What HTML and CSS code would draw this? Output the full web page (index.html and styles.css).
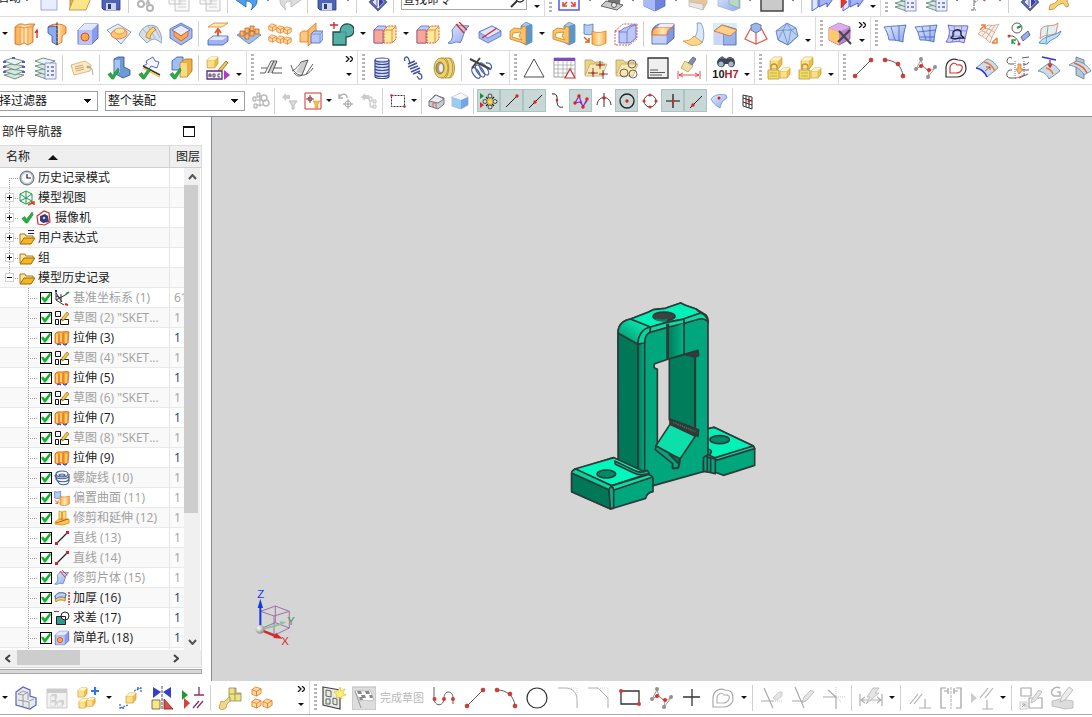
FILE: index.html
```html
<!DOCTYPE html>
<html lang="zh-CN">
<head>
  <meta charset="UTF-8" />
  <meta name="viewport" content="width=device-width, initial-scale=1.0" />
  <title>部件导航器</title>
  <link rel="stylesheet" href="styles.css">
</head>
<body>

  <!-- icon sprite -->
  <svg class="sprite" aria-hidden="true">
    <defs>
      <linearGradient id="gb" x1="0" y1="0" x2="1" y2="1"><stop offset="0" stop-color="#e4ecff"/><stop offset="1" stop-color="#8ea6ea"/></linearGradient>
      <linearGradient id="go" x1="0" y1="0" x2="1" y2="0"><stop offset="0" stop-color="#ffa640"/><stop offset=".5" stop-color="#ffe8b4"/><stop offset="1" stop-color="#ffa640"/></linearGradient>
      <linearGradient id="gy" x1="0" y1="0" x2="1" y2="1"><stop offset="0" stop-color="#fff3b0"/><stop offset="1" stop-color="#efb62e"/></linearGradient>
      <radialGradient id="gg" cx=".35" cy=".35" r=".7"><stop offset="0" stop-color="#ffffff"/><stop offset="1" stop-color="#8a8a8a"/></radialGradient>
    </defs>

    <symbol id="cube-y" viewBox="0 0 12 12"><path d="M1 4l3-3h7v6l-3 4H1z" fill="#f0bc48" stroke="#c89632" stroke-width=".7"/><path d="M1 4l3-3h7L8 4z" fill="#fff4c4"/><path d="M1.500 4.500h6v6h-6z" fill="#fce08c"/></symbol>
    <symbol id="cube-o" viewBox="0 0 12 12"><path d="M1 4l4-3 6 2v5l-5 3-5-2z" fill="#ffdc98" stroke="#e0681c"/><path d="M1 4l5 2 5-3M6 6v5" fill="none" stroke="#e0681c"/></symbol>
    <symbol id="cube-g" viewBox="0 0 12 12"><path d="M1 4l3-3h7v6l-3 4H1z" fill="#d4d4d4" stroke="#b4b4b4" stroke-width=".7"/><path d="M1 4h7v7H1z" fill="#f2f2f2"/></symbol>
    <symbol id="tick" viewBox="0 0 14 14"><path d="M1 8l3-2 2 3 6-8 1 3-6 9H5z" fill="#27b040" stroke="#127a28" stroke-width=".6"/></symbol>

    <!-- standard bar -->
    <symbol id="new" viewBox="0 0 24 24"><path d="M4 2h16v20H4z" fill="#e8edff" stroke="#8a93d8"/></symbol>
    <symbol id="open" viewBox="0 0 24 24"><path d="M2 20V4h7l2 3h9v4" fill="#d9b94e" stroke="#a8842a"/><path d="M1 22l5-12h17l-5 12z" fill="#fae48c" stroke="#b08e30"/></symbol>
    <symbol id="save" viewBox="0 0 24 24"><path d="M3 3h18v19H5l-2-2z" fill="#4c63b8" stroke="#2c3a7c"/><path d="M7 3h10v9H7z" fill="#b9cdf4"/><path d="M7 15h10v7H7z" fill="#cdd3e8"/><path d="M9 16h3v5H9z" fill="#2c3a7c"/></symbol>
    <symbol id="cut" viewBox="0 0 24 24"><path d="M7 2l7 15M17 2l-7 15" stroke="#bbb" stroke-width="2" fill="none"/><circle cx="5" cy="16" r="3" fill="none" stroke="#b5b5b5" stroke-width="2"/><circle cx="14" cy="20" r="3" fill="none" stroke="#b5b5b5" stroke-width="2"/></symbol>
    <symbol id="copy" viewBox="0 0 24 24"><path d="M2 2h11v14H2zM8 8h14v15H8z" fill="#f8f8f8" stroke="#b8b8b8"/><path d="M4 9h4M4 12h4M11 13h8M11 16h8M11 19h8" stroke="#c4c4c4"/></symbol>
    <symbol id="undo" viewBox="0 0 24 24"><path d="M1 12l10-9v5c12-1 15 6 5 14 3-5 1-9-5-9v6z" fill="#4fa0ea" stroke="#1762b4"/></symbol>
    <symbol id="redo" viewBox="0 0 24 24"><path d="M23 12L13 3v5C1 7-2 14 8 22c-3-5-1-9 5-9v6z" fill="#ddd" stroke="#b5b5b5"/></symbol>
    <symbol id="diamond" viewBox="0 0 24 24"><path d="M1 8h9M5 3l8 8" stroke="#222a80" stroke-width="2"/><path d="M14 6l8 8-8 8-8-8z" fill="#f4f6ff" stroke="#50608c" stroke-width="2"/><path d="M13 9v10l-5-5z" fill="#dfe4ff" stroke="#3a3dbb"/><path d="M15 9v10l5-5z" fill="#3a3dbb"/></symbol>
    <symbol id="fit" viewBox="0 0 24 24"><path d="M2 2h20v20H2z" fill="#f4f6ff" stroke="#5362cc" stroke-width="1.500"/><path d="M10 14l-4 4m0-4v4h4M14 14l4 4m0-4v4h-4" stroke="#e2492c" stroke-width="1.500" fill="none"/></symbol>
    <symbol id="laptop" viewBox="0 0 24 24"><path d="M8 14L9 1l12 2-1 13z" fill="#777"/><path d="M1 18l5-5 17 4-6 5z" fill="#ccc" stroke="#444"/><circle cx="14" cy="17" r="2.500" fill="#eee" stroke="#444"/></symbol>
    <symbol id="cube-b" viewBox="0 0 24 24"><path d="M1 6l10-4 11 4v12l-10 5-11-5z" fill="#6d84dc" stroke="#5566c0"/><path d="M1 6l11 4v13L1 18z" fill="#a9b9f5"/><path d="M1 6l10-4 11 4-10 4z" fill="#d2dcff"/></symbol>
    <symbol id="face" viewBox="0 0 24 24"><path d="M3 14V2l18 3v10l-4 7v-6z" fill="#e8c49a" stroke="#c8b8a8"/><path d="M3 14l14 2v6L3 18z" fill="#e8e8e8" stroke="#bbb"/></symbol>
    <symbol id="box-g" viewBox="0 0 24 24"><path d="M1 2h18l4 4v14l-7 3-15-5z" fill="url(#gb)" stroke="#a8b6cc"/><path d="M12 6h10v14l-10-4z" fill="#b9d8c8" stroke="#8cb0a0"/></symbol>
    <symbol id="screen" viewBox="0 0 24 24"><path d="M1 2h22v21H1z" fill="#cacaca" stroke="#444" stroke-width="1.500"/></symbol>
    <symbol id="goto" viewBox="0 0 24 24"><path d="M3 5l6-4v18l-6 4z" fill="#dfe7ff" stroke="#364ac0"/><path d="M10 8h8V3l6 8-6 8v-4l-8 4z" fill="#a4b4f6" stroke="#243cd8"/></symbol>
    <symbol id="goto-r" viewBox="0 0 24 24"><use href="#goto"/><path d="M1 9l6 5-6 6z" fill="#e23a30" stroke="#8e1616" stroke-width=".5"/></symbol>
    <symbol id="stacklist" viewBox="0 0 24 24"><use href="#layers"/><path d="M12 7h11v16H12z" fill="#eef0ff" stroke="#7680c8"/><path d="M14 11h2m2 0h3m-7 4h2m2 0h3m-7 4h2m2 0h3" stroke="#5a6cc8" stroke-width="1.300"/></symbol>
    <symbol id="axes" viewBox="0 0 24 24"><path d="M7 22V3M7 15l9-8M4 22h5" stroke="#999" fill="none" stroke-width="1.500" stroke-dasharray="3 1"/><path d="M14 8l4 5" stroke="#d8544c" stroke-width="2"/></symbol>
    <symbol id="wrench" viewBox="0 0 24 24"><path d="M2 22l1-5 5-2 3-3 5-10 4 4 3 2-3 5 2 5-3 1-3-4-5 2-4 4z" fill="#f4d272" stroke="#b99138"/></symbol>

    <!-- feature bar -->
    <symbol id="extrude" viewBox="0 0 24 24"><path d="M1 5l4-3h4l2 1 4-1h6l-2 3v15l-5 3-4-2-4 2-5-1z" fill="url(#go)" stroke="#c86a26"/><path d="M1 5h6l3 1 4-1h5M10 6v15M14 5v17M6 5v17" stroke="#e08a3c" fill="none"/><path d="M23 16V9m-2 2l2-3 1 3" stroke="#d52b20" stroke-width="1.300" fill="none"/></symbol>
    <symbol id="revolve" viewBox="0 0 24 24"><path d="M3 5c3-4 15-4 18 0v6l-4 3v6l-5 3V2z" fill="url(#go)" stroke="#c86a26"/><path d="M3 5l9-1v19l-5-3v-6l-4-3z" fill="#8caaf0" stroke="#3752ac"/><path d="M12 0v24" stroke="#333" stroke-dasharray="3 1"/></symbol>
    <symbol id="hole" viewBox="0 0 24 24"><path d="M2 8l6-6h14v14l-6 6H2z" fill="#8b9cec" stroke="#4a52b8"/><path d="M2 8l6-6h14l-6 6z" fill="#e0e7ff"/><path d="M2.500 8h13.500v14H2.500z" fill="#b7c5fb"/><circle cx="9" cy="15" r="4" fill="#ffa84a" stroke="#d3341c"/></symbol>
    <symbol id="emboss" viewBox="0 0 24 24"><path d="M0 8l11-6 13 8-10 12z" fill="#e3eefc" stroke="#5a8cc8"/><path d="M4 13c0-7 16-9 16-2 0 7-14 8-16 2z" fill="#ffc47a" stroke="#e66a1f"/><path d="M7 9c2-4 10-4 11 0-2 4-9 4-11 0z" fill="#ffe49c" stroke="#e88a2c"/></symbol>
    <symbol id="offsetemb" viewBox="0 0 24 24"><path d="M1 13C4 4 12 1 19 5c3 4 5 9 5 16l-7-4c-3 0-5 1-8 4z" fill="#d4e0ea" stroke="#7690a6"/><path d="M5 7l9 11M10 4l7 12M16 4l6 12" stroke="#9bb0c1" fill="none"/><path d="M15 5c-4 3-7 6-7 10l4 2c0-4 2-7 6-9z" fill="#ffcf6c" stroke="#bb762a"/></symbol>
    <symbol id="rib" viewBox="0 0 24 24"><path d="M1 7l11-6 11 6v9l-11 7-11-7z" fill="#a6baf0" stroke="#4567bd"/><path d="M3 8l9-5 9 5-9 6z" fill="#e5edff" stroke="#4567bd"/><path d="M5 9l7 5 7-5v5l-7 5-7-5z" fill="#ffa850" stroke="#d45c22"/></symbol>
    <symbol id="patface" viewBox="0 0 24 24"><path d="M2 5l6-4h14l-6 4z" fill="#ffe9b0" stroke="#d58430"/><path d="M12 14V8m-3 3l3-4 3 4" stroke="#e2602f" stroke-width="2" fill="none"/><path d="M2 18l5-4h15v5l-5 4H2z" fill="#9fb2f6" stroke="#4557b8"/><path d="M2.500 18l5-3.500h14l-5 3.500z" fill="#dde6ff"/></symbol>
    <symbol id="pattern" viewBox="0 0 24 24"><path d="M0 13l12-6 12 6-12 9z" fill="#9fc0ea" stroke="#537fc2"/><g fill="#ffb860" stroke="#c0622a"><path d="M3 9h4v5H3zM8 6h4v5H8zM13 4h4v5h-4zM8 12h4v5H8zM13 9h4v5h-4zM18 7h4v5h-4z"/></g></symbol>
    <symbol id="six" viewBox="0 0 24 24"><use href="#cube-o" x="0" y="1" width="9" height="9"/><use href="#cube-o" x="8" y="3" width="9" height="9"/><use href="#cube-o" x="15" y="4" width="9" height="9"/><use href="#cube-o" x="0" y="12" width="9" height="9"/><use href="#cube-o" x="8" y="13" width="9" height="9"/><use href="#cube-o" x="15" y="14" width="9" height="9"/></symbol>
    <symbol id="mirror" viewBox="0 0 24 24"><path d="M1 11l3-2h7v8l-3 3H1z" fill="#ffc880" stroke="#d0792a"/><path d="M9 8l8-7v16l-8 7z" fill="#ffbe62" stroke="#d87325"/><path d="M12 12l3-3h9v8l-3 4h-9z" fill="#b4c8fc" stroke="#4a66b8"/><path d="M12 12h9v9M21 12l3-3" fill="none" stroke="#6f88d0"/></symbol>
    <symbol id="unite" viewBox="0 0 24 24"><path d="M3 10h7c0-11 14-10 14-2 0 5-4 7-8 7v8H3z" fill="#55b0a6" stroke="#234a48" stroke-width="1.300"/><path d="M10 10h6v5" fill="none" stroke="#3b8c86"/><path d="M4 0v7M0 3h8" stroke="#dc2424" stroke-width="1.300"/></symbol>
    <symbol id="trim" viewBox="0 0 24 24"><path d="M1 8l4-4h8v14l-3 3H1z" fill="#bcccff" stroke="#5d69c2"/><path d="M1 8h9v13H1z" fill="#f7a898" stroke="#a5546c"/><path d="M11 8l4-4h8v13l-4 4h-8z" fill="#ffea98" stroke="#d32a24" stroke-dasharray="2 1"/><path d="M11 8h8v13M19 8l4-4" stroke="#d07a30" fill="none"/></symbol>
    <symbol id="trimsheet" viewBox="0 0 24 24"><path d="M5 8l5-6c3 3 7 1 12 2-6 4-5 12-9 17-5-3-7 2-12 0 5-3 5-7 4-13z" fill="url(#gb)" stroke="#4e65b8"/><path d="M9 2l8 9M12 0l8 8" stroke="#dc2a27" stroke-width="1.300"/></symbol>
    <symbol id="split" viewBox="0 0 24 24"><path d="M1 10l13-6 9 5v5l-13 7-9-5z" fill="#a4b9f2" stroke="#5671c6"/><path d="M1 10l13-6 9 5-13 7z" fill="#dce6ff" stroke="#5671c6"/><path d="M4 16L19 6" stroke="#de2929" stroke-width="1.300"/></symbol>
    <symbol id="shell" viewBox="0 0 24 24"><path d="M12 4l5-4 6 3v17l-6 3-5-3z" fill="#a4cae6" stroke="#5a88b0"/><path d="M17 4l6-2v18l-6 3z" fill="#5a96c8"/><path d="M1 9l4-3 8 1v-3l4 1v17L1 17z" fill="#ffc264" stroke="#c48436"/><path d="M4 11l8-1-2 4 3 4-10-3z" fill="#fff6dc" stroke="#b2923a"/></symbol>
    <symbol id="thick" viewBox="0 0 24 24"><path d="M1 2c3 2 5 1 9 0v10c-4 1-6 1-9 0z" fill="#b4cef6" stroke="#4a74b8"/><path d="M9 9c4 2 8 2 14 0v12c-5 3-10 3-14 1z" fill="url(#go)" stroke="#d98226"/><path d="M1 15l5 5m0-4v4H2" stroke="#e0641c" stroke-width="1.500" fill="none"/></symbol>
    <symbol id="scale" viewBox="0 0 24 24"><path d="M5 10l5-4c4 0 5-4 12-3v13l-6 5H5z" fill="#bcc8f8" stroke="#5262c0"/><path d="M5 10h8c1-4 4-6 9-7M13 10v11" fill="none" stroke="#6270cc"/><path d="M1 9l8-7h14M1 9v14h14l8-6V2M1 9h6" stroke="#d93838" stroke-dasharray="2 1" fill="none"/></symbol>
    <symbol id="blend" viewBox="0 0 24 24"><path d="M1 9c1-4 3-5 7-7h15v14l-7 6H1z" fill="#8299e0" stroke="#3c4da0"/><path d="M1.500 12h14v9.500h-14z" fill="#c4d2fb"/><path d="M1 13c0-6 3-7 6-8h16c-5 1-7 4-7 8z" fill="url(#go)" stroke="#d5612a"/><path d="M9 2h14l-2 3H6z" fill="#e9efff"/></symbol>
    <symbol id="faceblend" viewBox="0 0 24 24"><path d="M15 1h4c3 6 4 14 1 20l-8-5c3-3 4-9 3-15z" fill="#dce8f8" stroke="#6b8fc4"/><path d="M1 19c6 0 9-2 11-5l8 6c-2 3-7 4-12 3z" fill="#ffd68c" stroke="#d98b35"/></symbol>
    <symbol id="draft" viewBox="0 0 24 24"><path d="M0 1h24v22H0z" fill="#d3eef4"/><path d="M1 9l8-6 14 4v16H10V12z" fill="#98b2ea" stroke="#4d62b8"/><path d="M1 9l9 3v11H1z" fill="#c8d6f8"/><path d="M1 9l8-6 15 5-7 6z" fill="#ffd08a" stroke="#e56a30"/></symbol>
    <symbol id="pyramid" viewBox="0 0 24 24"><path d="M7 3l5-2 5 2v5l-5 3-5-3z" fill="#9bb8ec" stroke="#4566b2"/><path d="M7 6L1 17l11 5 11-5-6-11M12 11v11" stroke="#e0614a" fill="none" stroke-width="1.300"/></symbol>
    <symbol id="poly" viewBox="0 0 24 24"><path d="M12 1l9 5 2 8-10 9L3 18 1 9z" fill="#b8cff4" stroke="#4c6fb4"/><path d="M1 9l7-1 4-7 4 7 7 6M8 8h8l-3 15zM8 8l-5 10 10 5 10-9M16 8l5-2" stroke="#6c8cc8" fill="none"/></symbol>
    <symbol id="delface" viewBox="0 0 24 24"><path d="M1 6l10-5 11 4v12l-11 6-10-5z" fill="#bc80d4" stroke="#8a4ea4"/><path d="M1 6l10 4v13L1 18z" fill="#ffc868"/><path d="M1 6l10-5 11 4-11 5z" fill="#dcaee8"/><path d="M11 9l12 13M22 8L10 20" stroke="#484848" stroke-width="2.200"/></symbol>
    <symbol id="surf1" viewBox="0 0 24 24"><path d="M1 5c8-1 14-1 22-2-2 7-3 12-3 17-7-2-10-2-14-2C5 12 3 8 1 5z" fill="url(#gb)" stroke="#3c5dbc"/><path d="M8 5l4 13M16 4v15" stroke="#4463bd"/></symbol>
    <symbol id="surf2" viewBox="0 0 24 24"><use href="#surf1"/><path d="M4 10c6-1 12-1 18-2M6 15h15" stroke="#4463bd" fill="none"/></symbol>
    <symbol id="surf3" viewBox="0 0 24 24"><path d="M3 3c7 2 12 0 20 1l-4 17c-6-3-11 0-18-1 4-6 4-11 2-17z" fill="#c6d2fc" stroke="#5148d0"/><path d="M4 8c6 2 11 0 18 1M3 14c6 1 11-1 17 1M9 4c1 6 0 11-2 16M17 4l-3 16" stroke="#7a74e0" fill="none"/><path d="M8 10c2-3 7-3 8 0v3l3 3h-5l-4 1-4-1 2-2z" fill="none" stroke="#222" stroke-width="1.300"/></symbol>
    <symbol id="surf4" viewBox="0 0 24 24"><path d="M2 12L12 3c5 1 8 0 11-1-4 7-7 12-9 19-3-4-8-7-12-9z" fill="#f7efe8" stroke="#c6a48a"/><path d="M6 9c5 1 8 4 10 7M9 6c5 1 8 3 10 5M6 14l10-11M10 17l9-14" stroke="#c4a088" fill="none"/><path d="M4 8l5-5m-4 0h4v4M16 21h5v-5m-5 5l5-5" stroke="#ef7f3a" stroke-width="1.500" fill="none"/></symbol>
    <symbol id="surf5" viewBox="0 0 24 24"><circle cx="10" cy="6" r="5" fill="#fff" stroke="#333"/><path d="M10 6l4-2" stroke="#1b9b3d" stroke-width="2"/><path d="M2 14c5-1 9 3 10 8" stroke="#333" fill="none"/><circle cx="2" cy="14" r="1.500" fill="#d33"/><circle cx="12" cy="22" r="1.500" fill="#d33"/><path d="M14 15l7-6 2 4-7 6z" fill="#98aef0" stroke="#3c4aa0"/><path d="M5 19l3 3m-3 0v-4h4" stroke="#1b9b3d" stroke-width="1.300" fill="none"/></symbol>
    <symbol id="surf6" viewBox="0 0 24 24"><path d="M3 7c6-6 11-1 17-6l-2 10c-6 4-10 0-16 6z" fill="#e4eeec" stroke="#de6b64"/><path d="M1 21C6 13 15 15 23 9c-3 9-10 7-14 13z" fill="#c0def5" stroke="#2d83c4"/><path d="M10 4l-2 17" stroke="#47a99b" fill="none"/></symbol>

    <!-- layer / tools bar -->
    <symbol id="layers" viewBox="0 0 24 24"><g fill="#d4e8de" stroke="#58786f" stroke-width=".8"><path d="M2 19l8-2 12 2-9 4z"/><path d="M2 15l8-2 12 2-9 4z"/><path d="M2 10l8-2 12 2-9 4z"/><path d="M2 5l8-3 12 3-9 4z" fill="#e9f6ee"/></g></symbol>
    <symbol id="layers-b" viewBox="0 0 24 24"><use href="#layers"/><path d="M1 6h3M20 6h3M1 11h3M20 11h3M1 16h3M20 16h3M10 2h3" stroke="#5a5cc4" stroke-width="2"/></symbol>
    <symbol id="tag" viewBox="0 0 24 24"><path d="M1 9l14-4 6 4-1 6-16 4z" fill="#faeac2" stroke="#cfaa6e"/><path d="M5 11l8-2M5 13l9-2M6 15l8-2" stroke="#c08f6a"/><circle cx="18" cy="11" r="1" fill="#fff" stroke="#777"/><path d="M19 11c4 0 3 5 4 8" fill="none" stroke="#888"/></symbol>
    <symbol id="chk1" viewBox="0 0 24 24"><path d="M7 3l4-2h6v10l6 3v5l-7 3-9-5z" fill="#6e98d6" stroke="#25508e"/><path d="M7.500 4H13v12H7.500z" fill="#a5c6f2"/><use href="#tick" x="0" y="11" width="13" height="13"/></symbol>
    <symbol id="chk2" viewBox="0 0 24 24"><path d="M8 5l7-4 2 4 4 1-2 6-6-2-3 5-5-5 4-2z" fill="#f4f6ff" stroke="#3a43c8"/><path d="M5 10l17 9" stroke="#333" stroke-width="1.500"/><path d="M5 12l17 9" stroke="#efc64c" stroke-width="1.500"/><use href="#tick" x="0" y="11" width="13" height="13"/></symbol>
    <symbol id="chk3" viewBox="0 0 24 24"><path d="M3 5l5-4h6v13H3z" fill="#9fc0f4" stroke="#2f5aa2"/><path d="M11 7l5-4h7v12l-5 6h-7z" fill="#eab044" stroke="#ac741e"/><path d="M11.500 7H18v13.500h-6.500z" fill="#fbdc84"/><use href="#tick" x="0" y="11" width="13" height="13"/></symbol>
    <symbol id="abc" viewBox="0 0 24 24"><use href="#cube-y" x="0" y="0" width="13" height="13"/><path d="M20 5l2 2-7 8-3 1 1-3z" fill="#f2cc52" stroke="#7c5b1e"/><path d="M1 15h15v8H1z" fill="#f4ecff" stroke="#55307c" stroke-width="1.300"/><path d="M3 21v-3h2v3m-2-1h2M7 18v3h2v-3zM14 18h-2v3h2" stroke="#333" fill="none"/><path d="M18 14l6 5-6 5z" fill="#b838c0"/></symbol>
    <symbol id="sk1" viewBox="0 0 24 24"><path d="M13 6h5l-5 11H8z" fill="#ccc"/><path d="M1 17h5l6-12h6l-5 12h10M9 17l6-12M15 12h8M2 12h6" fill="none" stroke="#333"/></symbol>
    <symbol id="sk2" viewBox="0 0 24 24"><path d="M12 6l6-2-6 14-6-2z" fill="#ccc"/><path d="M1 9c3 12 15 14 22 3M2 15c4-2 6-4 9-9l7-2-6 15c-3 2-6 1-8-2M23 8l-7 10" fill="none" stroke="#333"/></symbol>
    <symbol id="spring1" viewBox="0 0 24 24"><path d="M5 4v17h14V4z" fill="#d5dcf6"/><g fill="none" stroke="#3a4c94" stroke-width="1.200"><ellipse cx="12" cy="4" rx="7" ry="2"/><path d="M5 7c2 2 12 2 14 0M5 10c2 2 12 2 14 0M5 13c2 2 12 2 14 0M5 16c2 2 12 2 14 0M5 19c2 2 12 2 14 0M5 21c2 2 12 2 14 0M5 4v17M19 4v17"/></g></symbol>
    <symbol id="spring2" viewBox="0 0 24 24"><path d="M4 5C2 1 7-1 8 4l1 3M17 17c5 1 5 7 1 6l-2-3" fill="none" stroke="#44549a" stroke-width="1.300"/><path d="M7 8l7-3M7 11l9-4M9 13l8-3M10 16l9-4M12 18l7-3" stroke="#44549a" stroke-width="1.800"/></symbol>
    <symbol id="bearing" viewBox="0 0 24 24"><path d="M9 2h9c6 2 6 18 0 20H9z" fill="#eed47c" stroke="#a88828"/><path d="M13 2c5 3 5 17 0 20M17 2c5 3 5 17 0 20" fill="none" stroke="#a88828"/><ellipse cx="9" cy="12" rx="7" ry="10" fill="#eed06c" stroke="#a88828"/><ellipse cx="8" cy="12" rx="4" ry="6" fill="#a8a07c" stroke="#806c24"/><ellipse cx="9" cy="12" rx="2" ry="4" fill="#eee"/></symbol>
    <symbol id="delspring" viewBox="0 0 24 24"><g fill="none" stroke="#4a5eaa" stroke-width="1.300"><ellipse cx="7" cy="17" rx="3" ry="6" transform="rotate(-35 7 17)"/><ellipse cx="11" cy="15" rx="3" ry="7" transform="rotate(-35 11 15)"/><ellipse cx="15" cy="13" rx="3" ry="7" transform="rotate(-35 15 13)"/><path d="M17 7c5-1 7 4 4 7"/></g><path d="M1 3l20 10M11 2L3 12" stroke="#444" stroke-width="2"/></symbol>
    <symbol id="tri" viewBox="0 0 24 24"><path d="M12 3l10 18H2z" fill="none" stroke="#222"/></symbol>
    <symbol id="tbl" viewBox="0 0 24 24"><path d="M1 2h21v19H1z" fill="#fff" stroke="#888"/><path d="M1 2h21v3H1z" fill="#7b4ac4"/><path d="M1 9h21M1 13h21M1 17h21M5 5v16M10 5v16M14 5v16M18 5v16" stroke="#aaa"/><path d="M17 13l5 9H12z" fill="#fff" stroke="#c8322c" stroke-width="1.200"/></symbol>
    <symbol id="fold" viewBox="0 0 24 24"><path d="M1 19V4h7l2 2h9v3" fill="#ead28c" stroke="#b89c58"/><path d="M1 20l5-12h17l-5 12z" fill="#fae8b4" stroke="#c0a868"/></symbol>
    <symbol id="foldpt" viewBox="0 0 24 24"><use href="#fold"/><path d="M16 5v8M12 9h9M9 12v9M4 17h10M19 14v9M15 18h9" stroke="#333"/><g fill="#e02820"><circle cx="16" cy="9" r="1.500"/><circle cx="9" cy="17" r="1.500"/><circle cx="19" cy="18" r="1.500"/></g></symbol>
    <symbol id="foldc" viewBox="0 0 24 24"><use href="#fold"/><g fill="none" stroke="#444"><circle cx="17" cy="8" r="4"/><circle cx="9" cy="17" r="4"/><circle cx="18" cy="18" r="4"/></g></symbol>
    <symbol id="note" viewBox="0 0 24 24"><path d="M2 2h20v20H2z" fill="#efefef" stroke="#333" stroke-width="1.300"/><path d="M4 14h8M4 16.500h15M4 19h12" stroke="#333"/></symbol>
    <symbol id="brush" viewBox="0 0 24 24"><path d="M16 1l3 2-4 6-4-2z" fill="#7a92b4" stroke="#556"/><path d="M8 5l8 5-5 6-7-4z" fill="#f0dfa0" stroke="#b49c54"/><path d="M1 15v8M23 15v8M2 19h20M6 17l-4 2 4 2M18 17l4 2-4 2" stroke="#d22a24" fill="none"/></symbol>
    <symbol id="binoc" viewBox="0 0 24 12"><path d="M3 6c1-5 6-6 9-3 3-4 9-2 9 4 0 5-6 6-7 1h-3c-1 5-8 4-8-2z" fill="#3e4654"/><path d="M5 3l3-3 4 3M13 3l3-2 4 2" fill="#5c6678"/><circle cx="7" cy="8" r="2.500" fill="#a8b8cc"/><circle cx="17" cy="8" r="2.500" fill="#a8b8cc"/></symbol>
    <symbol id="lock" viewBox="0 0 24 24"><use href="#cube-y" x="2" y="0" width="14" height="14"/><use href="#cube-y" x="12" y="11" width="12" height="12"/><path d="M4 14v-3c0-4 6-4 6 0v3" fill="none" stroke="#b89438" stroke-width="1.300"/><path d="M1 14h11v9H1z" fill="#f0dc68" stroke="#b89438"/><path d="M3 17h7M3 20h7" stroke="#c4a438"/></symbol>
    <symbol id="line" viewBox="0 0 24 24"><path d="M4 20L20 4" stroke="#333"/><g fill="#d93a30" stroke="#a01c18" stroke-width=".5"><circle cx="4" cy="20" r="2"/><circle cx="20" cy="4" r="2"/></g></symbol>
    <symbol id="arc" viewBox="0 0 24 24"><path d="M3 4c10 0 17 6 18 16" stroke="#333" fill="none"/><g fill="#d93a30" stroke="#a01c18" stroke-width=".5"><circle cx="3" cy="4" r="2"/><circle cx="16" cy="8" r="2"/><circle cx="21" cy="20" r="2"/></g></symbol>
    <symbol id="spline" viewBox="0 0 24 24"><path d="M3 13L8 4l2 6 6 5-1 6 7-9M3 13l5-3c4 1 5 4 8 5l6-3" stroke="#888" fill="none"/><g fill="#909090"><circle cx="3" cy="13" r="2"/><circle cx="8" cy="3" r="2"/><circle cx="15" cy="21" r="2"/><circle cx="22" cy="11" r="2"/></g><g fill="#e02c22"><circle cx="8" cy="10" r="2"/><circle cx="16" cy="14" r="2"/></g></symbol>
    <symbol id="offcurve" viewBox="0 0 24 24"><path d="M2 21V11c1-7 7-9 12-7 7 0 8 4 8 9 0 4-4 8-9 8z" fill="none" stroke="#333" stroke-width="1.200"/><path d="M6 17v-6c1-4 5-5 7-2 5-1 6 2 5 4-1 3-4 4-6 4z" fill="none" stroke="#d63830" stroke-width="1.200"/></symbol>
    <symbol id="cv1" viewBox="0 0 24 24"><path d="M1 12L12 3c5 1 8 4 11 9L12 21C10 16 6 13 1 12z" fill="#ccdceb" stroke="#557ca4"/><path d="M1 12c5 1 9 4 11 9" stroke="#2436e0" stroke-width="1.600" fill="none"/><path d="M9 6c6 1 9 5 11 9" stroke="#ee7a28" stroke-width="1.600" fill="none"/><path d="M10 15l5-4m-4 0h4v3" stroke="#c62a22" fill="none"/></symbol>
    <symbol id="cv2" viewBox="0 0 24 24"><path d="M6 2C1-1-1 8 4 8h4M6 14c-6-1-7 8-2 8h6M16 2l7-1M17 8c3 1 5 0 6-2M16 14h7M13 22l9-4" fill="none" stroke="#333"/><path d="M9 5v15M18 5v15" stroke="#2b34dc" stroke-dasharray="1 1"/><path d="M12 8h3v5h2l-4 5-3-5h2z" fill="#ffb864" stroke="#cf7b2b"/><path d="M9 22c4 0 6-2 10-4" stroke="#e22" fill="none"/></symbol>
    <symbol id="cv3" viewBox="0 0 24 24"><path d="M1 15l11-8c5 1 8 4 11 8l-11 8c-2-5-6-7-11-8z" fill="#ccdceb" stroke="#557ca4"/><path d="M9 12c4 1 6 3 7 6" stroke="#ee7a28" stroke-width="1.600" fill="none"/><path d="M5 1l14 3" stroke="#2436e0" stroke-width="1.300"/><path d="M13 4v6m-2-2l2 3 2-3" stroke="#c62a22" stroke-width="1.300" fill="none"/></symbol>
    <symbol id="cv4" viewBox="0 0 24 24"><path d="M8 1l8 3v19l-8-4z" fill="#b8c8d8" stroke="#56758f"/><path d="M1 9l7-4c7 1 12 5 15 10l-7 4C13 13 7 10 1 9z" fill="#ccdceb" stroke="#557ca4" opacity=".9"/><path d="M6 7c6 2 11 5 13 10" stroke="#e7662a" stroke-width="1.500" fill="none"/></symbol>

    <!-- selection bar, 18px icons -->
    <symbol id="s-tree" viewBox="0 0 18 18"><path d="M5 1h3v4H5zM1 5h3v4H1zM2 12h3v4H2zM8 3v12M5 8h6M5 13h6" fill="#eee" stroke="#aaa"/><circle cx="12" cy="6" r="3" fill="none" stroke="#bbb" stroke-width="1.500"/><circle cx="14" cy="11" r="3" fill="none" stroke="#bbb" stroke-width="1.500"/></symbol>
    <symbol id="s-filt" viewBox="0 0 18 18"><path d="M1 5l4-4v2h4v4H5v2z" fill="#ccc"/><path d="M8 9h8l-3 4v4h-2v-4z" fill="#ddd" stroke="#bbb"/></symbol>
    <symbol id="s-filt2" viewBox="0 0 18 18"><path d="M1 1h16v16H1z" fill="#fff" stroke="#d03030"/><path d="M6 3v8M2 7h8" stroke="#555"/><circle cx="6" cy="7" r="2" fill="none" stroke="#c22"/><path d="M9 9h7l-2 3v4h-3v-4z" fill="#f6c04c" stroke="#c98a1e" stroke-width=".5"/></symbol>
    <symbol id="s-back" viewBox="0 0 18 18"><path d="M2 2v4h4M2 5c3-4 8-4 8 1" fill="none" stroke="#aaa" stroke-width="1.300"/><path d="M11 7v10M6 12h10" stroke="#999"/><circle cx="11" cy="12" r="3" fill="none" stroke="#aaa"/></symbol>
    <symbol id="s-back2" viewBox="0 0 18 18"><path d="M1 5l4-4v2h4v4H5v2z" fill="#ccc"/><path d="M9 5h3v4H9zM13 8h3v3h-3zM13 13h3v3h-3zM10 9v6h3" fill="#eee" stroke="#c4c4c4"/></symbol>
    <symbol id="s-rect" viewBox="0 0 18 18"><path d="M2.500 3.500h13v11h-13z" fill="none" stroke="#333" stroke-dasharray="2 1"/><circle cx="2.500" cy="3.500" r="1.300" fill="#d22"/><circle cx="15.500" cy="14.500" r="1.300" fill="#d22"/></symbol>
    <symbol id="s-shade" viewBox="0 0 18 18"><path d="M1 9l6-6 9 3v6l-6 5-9-3z" fill="#c8ccd6" stroke="#777"/><path d="M1 9l7-6 8 4-6 4z" fill="#eceef4" stroke="#777"/><path d="M5 15v-4h3v5" stroke="#c66" fill="none"/></symbol>
    <symbol id="s-cube" viewBox="0 0 18 18"><path d="M1 5l9-4 7 4v8l-7 4-9-3z" fill="#6ca8e6" stroke="#b48cc0" stroke-width=".7"/><path d="M1 5l9 3v9l-9-3z" fill="#9ccaf4"/><path d="M1 5l9-4 7 4-7 3z" fill="#f4f8ff"/></symbol>
    <symbol id="s-snap" viewBox="0 0 18 18"><path d="M0 1l4 3-4 3z" fill="#14941f"/><path d="M0 10l4 3-4 3z" fill="#d92b20"/><g fill="#ddd" stroke="#222" stroke-width=".8"><circle cx="10" cy="4" r="2"/><circle cx="10" cy="15" r="2"/><circle cx="5" cy="9.500" r="2"/><circle cx="15" cy="9.500" r="2"/></g><path d="M10 6l3 4-3 3-3-3z" fill="#ffe02c" stroke="#9a8300" stroke-width=".5"/><path d="M6 5l2 2M14 5l-2 2M6 14l2-2M14 14l-2-2" stroke="#222" stroke-width="1.300"/></symbol>
    <symbol id="s-end" viewBox="0 0 18 18"><path d="M3 15L14 4" stroke="#222"/><circle cx="14" cy="4" r="1.700" fill="#e02020"/></symbol>
    <symbol id="s-mid" viewBox="0 0 18 18"><path d="M3 16L16 3" stroke="#222"/><circle cx="9" cy="10" r="1.700" fill="#e02020"/></symbol>
    <symbol id="s-ctl" viewBox="0 0 18 18"><path d="M3 2c6-1 5 4 5 7 0 5 2 7 6 6" stroke="#222" fill="none"/><circle cx="8" cy="8" r="1.300" fill="#e02020"/></symbol>
    <symbol id="s-poly" viewBox="0 0 18 18"><path d="M3 11l4-7 4 11 4-8M3 11l5-1 3 4 4-5" stroke="#8a28c4" fill="none" stroke-width="1.200"/><g fill="#e02020"><circle cx="3" cy="11" r="1.700"/><circle cx="7" cy="4" r="1.700"/><circle cx="11" cy="15" r="1.700"/><circle cx="15" cy="7" r="1.700"/></g></symbol>
    <symbol id="s-int" viewBox="0 0 18 18"><path d="M9 1v14M2 13c1-10 13-10 14 0" stroke="#333" fill="none"/><circle cx="9" cy="6" r="1.700" fill="#e02020"/></symbol>
    <symbol id="s-cen" viewBox="0 0 18 18"><circle cx="9" cy="9" r="7" fill="none" stroke="#222" stroke-width="1.300"/><circle cx="9" cy="9" r="1.700" fill="#e02020"/></symbol>
    <symbol id="s-quad" viewBox="0 0 18 18"><circle cx="9" cy="9" r="6" fill="none" stroke="#444"/><g fill="#e03030"><circle cx="9" cy="3" r="1.600"/><circle cx="9" cy="15" r="1.600"/><circle cx="3" cy="9" r="1.600"/><circle cx="15" cy="9" r="1.600"/></g></symbol>
    <symbol id="s-pt" viewBox="0 0 18 18"><path d="M9 2v14M2 9h14" stroke="#111" stroke-width="1.200"/><circle cx="9" cy="9" r="1.500" fill="#e02020"/></symbol>
    <symbol id="s-on" viewBox="0 0 18 18"><path d="M3 16L15 4" stroke="#222"/><circle cx="6" cy="13" r="1.700" fill="#e02020"/></symbol>
    <symbol id="s-surf" viewBox="0 0 18 18"><path d="M1 7C5 2 10 2 16 3l1 3c-5 3-6 6-7 10-5-3-7-5-9-9z" fill="url(#gb)" stroke="#6a94c8" stroke-width=".8"/><circle cx="9" cy="6" r="1.500" fill="#e02020"/></symbol>
    <symbol id="s-grid" viewBox="0 0 18 18"><path d="M4 3l9 2v12l-9-3zM7 4v11M10 5v11M4 6l9 3M4 10l9 3" stroke="#333" fill="#fff"/><circle cx="10" cy="9" r="1.500" fill="#e02020"/></symbol>

    <!-- assembly / sketch bar -->
    <symbol id="asm1" viewBox="0 0 24 24"><path d="M2 6l7-5 7 3v6l6 2v7l-6 4-14-4z" fill="#e6eaeb" stroke="#5a60c8" stroke-width="1.200"/><path d="M4 8l5 1v12M4 14l11 2v6M9 9l5-3M15 15l5-2M4 8l5-3 5 2v7" fill="none" stroke="#888"/></symbol>
    <symbol id="asm2" viewBox="0 0 24 24"><path d="M2 3h20v19H2z" fill="#f2f2f2" stroke="#c0c0c0"/><path d="M2 3h20v4H2z" fill="#ccc"/><use href="#cube-g" x="5" y="8" width="7" height="7"/><use href="#cube-g" x="5" y="14" width="7" height="7"/><use href="#cube-g" x="12" y="14" width="7" height="7"/></symbol>
    <symbol id="asm3" viewBox="0 0 24 24"><use href="#cube-y" x="1" y="1" width="11" height="11"/><use href="#cube-y" x="2" y="12" width="11" height="11"/><use href="#cube-y" x="10" y="11" width="10" height="10"/><path d="M19 1v8M15 5h8" stroke="#2b7ae4" stroke-width="2.200"/></symbol>
    <symbol id="asm4" viewBox="0 0 24 24"><use href="#cube-y" x="6" y="6" width="12" height="12"/><path d="M15 5l7-3m-4 0h4v4M9 19l-8 3m0-4v4h4" stroke="#3f6ed0" stroke-width="1.300" stroke-dasharray="2 1" fill="none"/></symbol>
    <symbol id="asm5" viewBox="0 0 24 24"><path d="M3 1l8 5-8 6zM21 1l-8 5 8 6z" fill="#3540c8"/><path d="M12 0v24" stroke="#222" stroke-dasharray="3 1"/><path d="M2 14h8v9H2z" fill="#f8e68c" stroke="#6b5620"/><path d="M14 13l9 10h-9z" fill="#d8504a" stroke="#8a1c18"/></symbol>
    <symbol id="asm6" viewBox="0 0 24 24"><path d="M1 4l6 5-6 5z" fill="#1f9a3c"/><path d="M3 12l6 5-6 6z" fill="#d84238"/><path d="M18 1v8M13 9h10M12 22l6-7M16 22l6-7" stroke="#86306c" stroke-width="1.300"/></symbol>
    <symbol id="asm7" viewBox="0 0 24 24"><path d="M1 22l2-7 3 1 6-6 3 2-6 6-1 4-4 2z" fill="#f5d682" stroke="#b99a4c"/><path d="M11 2h7v5h5v8H12v-4h-1z" fill="#f0e27c" stroke="#8d8c60"/><path d="M11 8h12M17 2v13" stroke="#8d8c60" fill="none"/></symbol>
    <symbol id="asm8" viewBox="0 0 24 24"><use href="#cube-o" x="2" y="0" width="11" height="11"/><use href="#cube-o" x="2" y="12" width="11" height="11"/><use href="#cube-o" x="13" y="12" width="11" height="11"/></symbol>
    <symbol id="sketch" viewBox="0 0 24 24"><path d="M1 1l17 3v19L1 19z" fill="#e8ebe4" stroke="#444" stroke-width="1.200"/><path d="M4 4l5 1v6l-5-1zM4 13h4v5H4zM11 12l4 1v6l-4-1z" fill="none" stroke="#444"/><path d="M18 1l1 4 4-2-2 4 3 2-4 1v3l-3-2-3 1 1-3-3-3 4-1z" fill="#ffee7a" stroke="#d8b62a" stroke-width=".6"/></symbol>
    <symbol id="flag" viewBox="0 0 24 24"><path d="M0 1h24v23H0z" fill="#ddd" stroke="#bbb"/><path d="M3 5c5-2 9 2 15-1l4 10c-6 2-9-1-14 1z" fill="#fff" stroke="#999" stroke-width=".5"/><path d="M3 5l6 17" stroke="#999"/><path d="M5 5h4l1 3H6zM13 5h4l1 3h-4zM9 9h4l1 3h-4zM17 9h3l1 3h-3zM7 11h3l1 3H8z" fill="#888"/></symbol>
    <symbol id="profile" viewBox="0 0 24 24"><path d="M2 1v11c0 9 10 9 10 0 0-8 9-8 9 0v6" stroke="#333" fill="none"/><g fill="#d93a30"><circle cx="2.500" cy="13" r="2"/><circle cx="12" cy="13" r="2"/><circle cx="21" cy="13" r="2"/></g></symbol>
    <symbol id="circle" viewBox="0 0 24 24"><circle cx="12" cy="12" r="10" fill="none" stroke="#333" stroke-width="1.200"/></symbol>
    <symbol id="fillet" viewBox="0 0 24 24"><path d="M2 2h7c8 0 12 5 12 12v8" stroke="#999" fill="none"/><path d="M11 2h10v10" stroke="#ccc" stroke-dasharray="1 1" fill="none"/></symbol>
    <symbol id="chamfer" viewBox="0 0 24 24"><path d="M1 2h10l10 10v10" stroke="#999" fill="none"/><path d="M11 2h10v10" stroke="#ccc" stroke-dasharray="1 1" fill="none"/></symbol>
    <symbol id="rect" viewBox="0 0 24 24"><path d="M3 5h18v13H3z" stroke="#333" stroke-width="1.300" fill="none"/><g fill="#d93a30"><circle cx="3" cy="5" r="2"/><circle cx="21" cy="18" r="2"/></g></symbol>
    <symbol id="plus" viewBox="0 0 24 24"><path d="M12 3v17M3 11h17" stroke="#333" stroke-width="1.300"/></symbol>
    <symbol id="offg" viewBox="0 0 24 24"><path d="M2 21V11c1-7 7-9 12-7 7 0 8 4 8 9 0 4-4 8-9 8z" fill="none" stroke="#aaa" stroke-width="1.200"/><path d="M6 17v-6c1-4 5-5 7-2 5-1 6 2 5 4-1 3-4 4-6 4z" fill="none" stroke="#b4b4b4" stroke-width="1.200"/></symbol>
    <symbol id="qtrim" viewBox="0 0 24 24"><path d="M4 2l9 20M1 15h12" stroke="#aaa" stroke-width="1.200"/><path d="M13 15h10" stroke="#aaa" stroke-dasharray="1 1"/><path d="M13 12l6-6h3v4l-5 4z" fill="#e4e4e4" stroke="#c4c4c4"/></symbol>
    <symbol id="qext" viewBox="0 0 24 24"><path d="M4 1l9 21M1 15h14" stroke="#aaa" stroke-width="1.200"/><path d="M20 4l3 2-7 8-5 3 2-6z" fill="#e4e4e4" stroke="#b4b4b4"/></symbol>
    <symbol id="corner" viewBox="0 0 24 24"><path d="M1 11h13v12M6 4l8 7" stroke="#aaa" stroke-width="1.200" fill="none"/><path d="M14 1v10h9M14 11l6 6" stroke="#bbb" stroke-dasharray="1 1" fill="none"/></symbol>
    <symbol id="dimg" viewBox="0 0 24 24"><path d="M1 8v12M23 8v12M2 14h20M6 11l-4 3 4 3M18 11l4 3-4 3" stroke="#b0b0b0" stroke-width="1.200" fill="none"/><path d="M14 2h6l-4 5h4L7 18l4-7H8z" fill="#e4e4e4" stroke="#b4b4b4"/></symbol>
    <symbol id="cons1" viewBox="0 0 24 24"><path d="M2 18l8-10M6 18l8-10M11 22h12M17 13v9" stroke="#b0b0b0" stroke-width="1.200"/></symbol>
    <symbol id="cons2" viewBox="0 0 24 24"><path d="M7 2H2v20h5M17 2h5v20h-5M9 2v6M15 2v6M5 5h4M19 5h-4" stroke="#a0a0a0" stroke-width="1.200" fill="none"/><path d="M12 1v22" stroke="#999" stroke-dasharray="3 1"/></symbol>
    <symbol id="cons3" viewBox="0 0 24 24"><path d="M1 7l6 5-6 5z" fill="#ccc"/><path d="M10 12l8-10M15 12l8-10M12 23h11M17 14v9" stroke="#b0b0b0" stroke-width="1.200"/></symbol>
    <symbol id="shp1" viewBox="0 0 24 24"><path d="M2 2h10v8H2zM10 12h13v10H10z" fill="#fff" stroke="#a8a8a8" stroke-width="1.200"/><path d="M1 16h7v7H1z" fill="#f4f4f4" stroke="#c4c4c4"/><path d="M3 21l3-3m-3 0h3v3" stroke="#999" fill="none"/><path d="M20 4l3 2-7 9-4 2 1-4z" fill="#e4e4e4" stroke="#b4b4b4"/></symbol>
    <symbol id="shp2" viewBox="0 0 24 24"><path d="M10 2C4-1-2 7 4 10h6V6H7" fill="none" stroke="#b4b4b4" stroke-width="1.500"/><path d="M2 15l8-2 13 2v7l-8 1-13-3z" fill="#dcdcdc" stroke="#b8b8b8"/><path d="M19 1l4 3-8 10-5 2 2-6z" fill="#ececec" stroke="#b0b0b0"/></symbol>

    <!-- tree icons -->
    <symbol id="t-clock" viewBox="0 0 16 16"><circle cx="8" cy="8" r="7" fill="#b8c4d0" stroke="#666"/><circle cx="8" cy="8" r="5" fill="#fff"/><path d="M8 4v4h4" stroke="#222" fill="none" stroke-width="1.200"/></symbol>
    <symbol id="t-view" viewBox="0 0 16 16"><path d="M1 4l6-3 6 3v7l-6 3-6-3zM1 4l6 4 6-4M7 1v13M1 11l6-3 6 3" fill="none" stroke="#1c9a52"/><path d="M9 15l6-3m-3 0h3v3" stroke="#e33a1c" stroke-width="1.500" fill="none"/></symbol>
    <symbol id="t-cam" viewBox="0 0 16 16"><path d="M1 6l7-5 5 2 1 9-5 3-7-1z" fill="#fff" stroke="#d63026" stroke-width="1.200"/><path d="M4 6l5-2 3 2 1 6-6 1-3-2z" fill="#3a3f94"/><circle cx="8" cy="8" r="2" fill="#c8d0f4" stroke="#222"/></symbol>
    <symbol id="t-fold" viewBox="0 0 16 16"><path d="M1 13V4h5l1 2h7v2" fill="#ffe79a" stroke="#a8791c"/><path d="M1 14l4-6h11l-4 6z" fill="#f7b51e" stroke="#9a6a10"/></symbol>
    <symbol id="t-foldx" viewBox="0 0 16 16"><use href="#t-fold"/><path d="M9 .5h6M9 3.500h6" stroke="#22227c"/></symbol>
    <symbol id="t-csys" viewBox="0 0 16 16"><path d="M2 1v9l8 5M2 10l11-6M2 3l6 9M7 4v8M2 6l5 2" stroke="#333" fill="none"/><path d="M12 4l3-2" stroke="#1c9a3c" stroke-width="2"/><path d="M11 14l3 1" stroke="#d22" stroke-width="2"/><path d="M1 1h2" stroke="#22d" stroke-width="2"/></symbol>
    <symbol id="t-sk" viewBox="0 0 16 16"><path d="M1.500 1.500h5v5h-5zM1.500 9.500h3v5h-3zM6.500 9.500h8v5h-8z" fill="#fff" stroke="#111"/><path d="M13 2l2 2-5 6-2 1 0-3z" fill="#f6c83c" stroke="#8a642c" stroke-width=".7"/></symbol>
    <symbol id="t-ext" viewBox="0 0 16 16"><path d="M1 4c2-3 4-2 6-2s5-1 8 0l-1 11-3 1-4-1-3 1-3-1z" fill="#ffa02c" stroke="#d4601c" stroke-width=".8"/><path d="M3 4v9M7 3v9M12 4v9" stroke="#ffe08a" stroke-width="1.500"/><path d="M5 4v9M9 3v10" stroke="#d4601c" stroke-width=".8"/><path d="M3 15l2-1 2 1M9 14l2 1 2-1" stroke="#2a44c8" fill="none" stroke-width="1.200"/></symbol>
    <symbol id="t-helix" viewBox="0 0 16 16"><g fill="none" stroke="#45619e" stroke-width="1.200"><ellipse cx="8" cy="4" rx="6" ry="3"/><ellipse cx="8" cy="5" rx="3" ry="1"/><path d="M1 5c0 5 14 5 14 0M2 8c1 5 13 5 13 0M4 11c1 5 10 5 11 0M2 4v5l3 4M15 4v7"/></g></symbol>
    <symbol id="t-ste" viewBox="0 0 16 16"><path d="M5 1l3 1 4-1v8H5z" fill="#ffdc70" stroke="#d4a028" stroke-width=".8"/><path d="M1 12l4-3 4 1 6-1v4l-6 2-8-1z" fill="#f9cc3c" stroke="#c99024" stroke-width=".8"/><path d="M8 2v8" stroke="#c66b20"/><path d="M2 13l6-2 6-2" stroke="#e04040" fill="none"/></symbol>
    <symbol id="t-line" viewBox="0 0 16 16"><path d="M2 14L14 2" stroke="#222" stroke-width="1.200"/><path d="M1 12h3v3H1zM12 1h3v3h-3z" fill="#d62020"/></symbol>
    <symbol id="t-thick" viewBox="0 0 16 16"><path d="M1 6c3-4 7-4 11-2l-1 7c-4-2-7-1-9 1z" fill="#ffcf66" stroke="#b9822c"/><path d="M1 6c3-4 7-4 11-2l-1 4C7 6 4 7 2 9z" fill="#b6d3f6" stroke="#4a74b8"/><path d="M15 2v13" stroke="#d22" stroke-width="1.500" stroke-dasharray="2 1"/></symbol>
    <symbol id="t-sub" viewBox="0 0 16 16"><path d="M2.500 6.500h9v8h-9z" fill="#2f9a8c" stroke="#222"/><circle cx="11" cy="6" r="4" fill="#fff" stroke="#222"/><path d="M7 6.500h4.500V10" fill="none" stroke="#222"/><path d="M0 1.500h5" stroke="#d22"/></symbol>
    <symbol id="more" viewBox="0 0 8 6"><path d="M1 0l3 3-3 3M5 0l3 3-3 3" fill="none" stroke="#111" stroke-width="1.300"/></symbol>
  </svg>

  <div class="app">
    <header class="toolbars">

      <div class="bar bar-top">
        <button class="start">启动</button><button class="drop" title="启动选项"></button>
        <button class="tool" title="新建"><svg><use href="#new"/></svg></button>
        <button class="tool" title="打开"><svg><use href="#open"/></svg></button>
        <button class="tool" title="保存"><svg><use href="#save"/></svg></button>
        <i class="sep"></i>
        <button class="tool" title="剪切"><svg><use href="#cut"/></svg></button>
        <button class="tool" title="复制"><svg><use href="#copy"/></svg></button>
        <button class="tool" title="粘贴"><svg><use href="#copy"/></svg></button>
        <i class="sep"></i>
        <button class="tool" title="撤消"><svg><use href="#undo"/></svg></button><button class="drop" title="撤消列表"></button>
        <button class="tool" title="重做"><svg><use href="#redo"/></svg></button>
        <i class="sep"></i>
        <button class="tool" title="保存全部"><svg><use href="#save"/></svg></button><button class="drop" title="更多保存"></button>
        <i class="sep"></i>
        <button class="tool" title="切换窗口"><svg><use href="#diamond"/></svg></button>
        <i class="sep"></i>
        <div class="finder">
          <input type="text" value="查找命令" aria-label="查找命令">
          <button title="查找"><svg viewBox="0 0 16 16"><circle cx="10" cy="6" r="4" fill="#fff" stroke="#333" stroke-width="1.500"/><path d="M7 9l-6 6" stroke="#333" stroke-width="2"/></svg></button>
        </div>
        <button class="drop low" title="工具条选项"></button>
        <i class="grip"></i>
        <button class="tool" title="适合窗口"><svg><use href="#fit"/></svg></button><button class="drop" title="缩放"></button>
        <button class="tool" title="显示"><svg><use href="#laptop"/></svg></button><button class="drop" title="显示选项"></button>
        <button class="tool" title="着色"><svg><use href="#cube-b"/></svg></button><button class="drop" title="渲染样式"></button>
        <button class="tool" title="面分析"><svg><use href="#face"/></svg></button>
        <button class="tool" title="视图"><svg><use href="#box-g"/></svg></button><button class="drop" title="视图选项"></button>
        <button class="tool" title="背景"><svg><use href="#screen"/></svg></button><button class="drop" title="背景选项"></button>
        <i class="sep"></i>
        <button class="tool" title="剪切截面"><svg><use href="#goto"/></svg></button>
        <button class="tool" title="编辑截面"><svg><use href="#goto-r"/></svg></button><button class="drop low" title="工具条选项"></button>
        <i class="grip"></i>
        <button class="tool" title="图层设置"><svg><use href="#stacklist"/></svg></button>
        <button class="tool" title="图层类别"><svg><use href="#stacklist"/></svg></button><button class="drop" title="图层选项"></button>
        <button class="tool" title="WCS"><svg><use href="#axes"/></svg></button><button class="drop" title="WCS 选项"></button>
        <i class="sep"></i>
        <button class="tool" title="对象显示"><svg><use href="#diamond"/></svg></button>
        <button class="tool" title="首选项"><svg><use href="#wrench"/></svg></button>
      </div>

      <div class="bar">
        <button class="drop first" title="更多"></button>
        <button class="tool" title="拉伸"><svg><use href="#extrude"/></svg></button>
        <button class="tool" title="回转"><svg><use href="#revolve"/></svg></button>
        <button class="tool" title="孔"><svg><use href="#hole"/></svg></button>
        <button class="tool" title="凸起"><svg><use href="#emboss"/></svg></button>
        <button class="tool" title="偏置凸起"><svg><use href="#offsetemb"/></svg></button>
        <button class="tool" title="筋板"><svg><use href="#rib"/></svg></button>
        <i class="sep"></i>
        <button class="tool" title="偏置面"><svg><use href="#patface"/></svg></button>
        <button class="tool" title="阵列特征"><svg><use href="#pattern"/></svg></button>
        <button class="tool" title="阵列几何"><svg><use href="#six"/></svg></button>
        <button class="tool" title="镜像特征"><svg><use href="#mirror"/></svg></button>
        <button class="tool" title="求和"><svg><use href="#unite"/></svg></button><button class="drop" title="布尔"></button>
        <button class="tool" title="修剪体"><svg><use href="#trim"/></svg></button><button class="drop" title="修剪"></button>
        <button class="tool" title="拆分体"><svg><use href="#trim"/></svg></button>
        <button class="tool" title="修剪片体"><svg><use href="#trimsheet"/></svg></button>
        <button class="tool" title="分割面"><svg><use href="#split"/></svg></button>
        <button class="tool" title="抽壳"><svg><use href="#shell"/></svg></button><button class="drop" title="抽壳选项"></button>
        <button class="tool" title="壳单元"><svg><use href="#shell"/></svg></button>
        <button class="tool" title="偏置曲面"><svg><use href="#thick"/></svg></button>
        <button class="tool" title="缩放体"><svg><use href="#scale"/></svg></button>
        <i class="sep"></i>
        <button class="tool" title="边倒圆"><svg><use href="#blend"/></svg></button>
        <button class="tool" title="面倒圆"><svg><use href="#faceblend"/></svg></button>
        <button class="tool" title="拔模"><svg><use href="#draft"/></svg></button>
        <button class="tool" title="拔模体"><svg><use href="#pyramid"/></svg></button>
        <button class="tool" title="多面体"><svg><use href="#poly"/></svg></button><button class="drop low" title="工具条选项"></button>
        <i class="grip"></i>
        <button class="tool" title="删除面"><svg><use href="#delface"/></svg></button>
        <button class="drop low more" title="更多按钮"><svg><use href="#more"/></svg></button>
        <i class="grip"></i>
        <button class="tool" title="直纹"><svg><use href="#surf1"/></svg></button>
        <button class="tool" title="通过曲线网格"><svg><use href="#surf2"/></svg></button>
        <button class="tool" title="N 边曲面"><svg><use href="#surf3"/></svg></button>
        <button class="tool" title="延伸曲面"><svg><use href="#surf4"/></svg></button>
        <button class="tool" title="截面曲面"><svg><use href="#surf5"/></svg></button>
        <button class="tool" title="桥接曲面"><svg><use href="#surf6"/></svg></button>
      </div>

      <div class="bar bar-shift">
        <button class="tool" title="图层设置"><svg><use href="#layers-b"/></svg></button>
        <button class="tool" title="图层视图"><svg><use href="#stacklist"/></svg></button>
        <i class="sep"></i>
        <button class="tool" title="属性"><svg><use href="#tag"/></svg></button>
        <i class="sep"></i>
        <button class="tool" title="检查体"><svg><use href="#chk1"/></svg></button>
        <button class="tool" title="检查草图"><svg><use href="#chk2"/></svg></button>
        <button class="tool" title="检查装配"><svg><use href="#chk3"/></svg></button>
        <i class="sep"></i>
        <button class="tool" title="命名"><svg><use href="#abc"/></svg></button><button class="drop low" title="工具条选项"></button>
        <i class="grip"></i>
        <button class="tool" title="齿轮"><svg><use href="#sk1"/></svg></button>
        <button class="tool" title="锥齿轮"><svg><use href="#sk2"/></svg></button>
        <button class="drop low more spaced" title="更多按钮"><svg><use href="#more"/></svg></button>
        <i class="grip"></i>
        <button class="tool" title="压缩弹簧"><svg><use href="#spring1"/></svg></button>
        <button class="tool" title="拉伸弹簧"><svg><use href="#spring2"/></svg></button>
        <button class="tool" title="轴承"><svg><use href="#bearing"/></svg></button>
        <i class="sep"></i>
        <button class="tool" title="删除弹簧"><svg><use href="#delspring"/></svg></button><button class="drop low" title="工具条选项"></button>
        <i class="grip"></i>
        <button class="tool" title="三角形"><svg><use href="#tri"/></svg></button>
        <button class="tool" title="表格"><svg><use href="#tbl"/></svg></button>
        <button class="tool" title="点集"><svg><use href="#foldpt"/></svg></button>
        <button class="tool" title="圆集"><svg><use href="#foldc"/></svg></button>
        <button class="tool" title="注释"><svg><use href="#note"/></svg></button>
        <button class="tool" title="尺寸刷"><svg><use href="#brush"/></svg></button>
        <i class="sep"></i>
        <button class="tool tolerance" title="公差查询"><svg><use href="#binoc"/></svg><span>10<b>H7</b></span></button><button class="drop low" title="工具条选项"></button>
        <i class="grip"></i>
        <button class="tool" title="锁定"><svg><use href="#lock"/></svg></button>
        <button class="tool" title="解锁"><svg><use href="#lock"/></svg></button><button class="drop low" title="工具条选项"></button>
        <i class="grip"></i>
        <button class="tool" title="直线"><svg><use href="#line"/></svg></button>
        <button class="tool" title="圆弧"><svg><use href="#arc"/></svg></button>
        <button class="tool" title="艺术样条"><svg><use href="#spline"/></svg></button>
        <button class="tool" title="偏置曲线"><svg><use href="#offcurve"/></svg></button>
        <button class="tool" title="面上偏置"><svg><use href="#cv1"/></svg></button>
        <button class="tool" title="桥接曲线"><svg><use href="#cv2"/></svg></button>
        <button class="tool" title="投影曲线"><svg><use href="#cv3"/></svg></button>
        <button class="tool" title="相交曲线"><svg><use href="#cv4"/></svg></button>
      </div>

      <div class="bar bar-select">
        <select class="combo combo-filter" aria-label="选择过滤器"><option>选择过滤器</option></select>
        <select class="combo combo-scope" aria-label="选择范围"><option>整个装配</option></select>
        <button class="pick" title="装配约束"><svg><use href="#s-tree"/></svg></button>
        <i class="sep"></i>
        <button class="pick" title="重置过滤器"><svg><use href="#s-filt"/></svg></button>
        <button class="pick" title="细节过滤"><svg><use href="#s-filt2"/></svg></button><button class="drop narrow" title="过滤选项"></button>
        <button class="pick" title="恢复选择"><svg><use href="#s-back"/></svg></button>
        <button class="pick" title="选择上级"><svg><use href="#s-back2"/></svg></button>
        <i class="sep"></i>
        <button class="pick" title="矩形"><svg><use href="#s-rect"/></svg></button><button class="drop narrow" title="选择方式"></button>
        <i class="sep"></i>
        <button class="pick" title="隐藏边"><svg><use href="#s-shade"/></svg></button>
        <button class="pick" title="着色"><svg><use href="#s-cube"/></svg></button>
        <i class="sep"></i>
        <button class="pick on" title="启用捕捉点"><svg><use href="#s-snap"/></svg></button>
        <button class="pick on" title="终点"><svg><use href="#s-end"/></svg></button>
        <button class="pick on" title="中点"><svg><use href="#s-mid"/></svg></button>
        <button class="pick" title="控制点"><svg><use href="#s-ctl"/></svg></button>
        <button class="pick on" title="极点"><svg><use href="#s-poly"/></svg></button>
        <button class="pick" title="交点"><svg><use href="#s-int"/></svg></button>
        <button class="pick on" title="圆弧中心"><svg><use href="#s-cen"/></svg></button>
        <button class="pick" title="象限点"><svg><use href="#s-quad"/></svg></button>
        <button class="pick on" title="现有点"><svg><use href="#s-pt"/></svg></button>
        <button class="pick on" title="点在曲线上"><svg><use href="#s-on"/></svg></button>
        <button class="pick" title="点在面上"><svg><use href="#s-surf"/></svg></button>
        <i class="sep"></i>
        <button class="pick" title="栅格点"><svg><use href="#s-grid"/></svg></button>
      </div>
    </header>

    <main class="workspace">
      <aside class="navigator">
        <div class="nav-title">
          <h2>部件导航器</h2>
          <button class="maximize" title="最大化"></button>
        </div>

        <div class="nav-body">
          <div class="tree-view">
            <table class="tree">
              <thead>
                <tr><th class="col-name">名称<i class="sort"></i></th><th>图层</th></tr>
              </thead>
              <tbody>
                <tr><td><div class="node"><span class="branch top"></span><svg><use href="#t-clock"/></svg>历史记录模式</div></td><td></td></tr>
                <tr><td><div class="node"><span class="branch"><button class="expander" title="展开"></button></span><svg><use href="#t-view"/></svg>模型视图</div></td><td></td></tr>
                <tr><td><div class="node"><span class="branch"><button class="expander" title="展开"></button></span><svg class="mark"><use href="#tick"/></svg><svg><use href="#t-cam"/></svg>摄像机</div></td><td></td></tr>
                <tr><td><div class="node"><span class="branch"><button class="expander" title="展开"></button></span><svg><use href="#t-foldx"/></svg>用户表达式</div></td><td></td></tr>
                <tr><td><div class="node"><span class="branch"><button class="expander" title="展开"></button></span><svg><use href="#t-fold"/></svg>组</div></td><td></td></tr>
                <tr><td><div class="node"><span class="branch last"><button class="expander open" title="折叠"></button></span><svg><use href="#t-fold"/></svg>模型历史记录</div></td><td></td></tr>
                <tr class="dim"><td><label class="node"><span class="branch sub"></span><input type="checkbox" checked><svg><use href="#t-csys"/></svg>基准坐标系 (1)</label></td><td>61</td></tr>
                <tr class="dim"><td><label class="node"><span class="branch sub"></span><input type="checkbox" checked><svg><use href="#t-sk"/></svg>草图 (2) "SKET...</label></td><td>1</td></tr>
                <tr><td><label class="node"><span class="branch sub"></span><input type="checkbox" checked><svg><use href="#t-ext"/></svg>拉伸 (3)</label></td><td>1</td></tr>
                <tr class="dim"><td><label class="node"><span class="branch sub"></span><input type="checkbox" checked><svg><use href="#t-sk"/></svg>草图 (4) "SKET...</label></td><td>1</td></tr>
                <tr><td><label class="node"><span class="branch sub"></span><input type="checkbox" checked><svg><use href="#t-ext"/></svg>拉伸 (5)</label></td><td>1</td></tr>
                <tr class="dim"><td><label class="node"><span class="branch sub"></span><input type="checkbox" checked><svg><use href="#t-sk"/></svg>草图 (6) "SKET...</label></td><td>1</td></tr>
                <tr><td><label class="node"><span class="branch sub"></span><input type="checkbox" checked><svg><use href="#t-ext"/></svg>拉伸 (7)</label></td><td>1</td></tr>
                <tr class="dim"><td><label class="node"><span class="branch sub"></span><input type="checkbox" checked><svg><use href="#t-sk"/></svg>草图 (8) "SKET...</label></td><td>1</td></tr>
                <tr><td><label class="node"><span class="branch sub"></span><input type="checkbox" checked><svg><use href="#t-ext"/></svg>拉伸 (9)</label></td><td>1</td></tr>
                <tr class="dim"><td><label class="node"><span class="branch sub"></span><input type="checkbox" checked><svg><use href="#t-helix"/></svg>螺旋线 (10)</label></td><td>1</td></tr>
                <tr class="dim"><td><label class="node"><span class="branch sub"></span><input type="checkbox" checked><svg><use href="#thick"/></svg>偏置曲面 (11)</label></td><td>1</td></tr>
                <tr class="dim"><td><label class="node"><span class="branch sub"></span><input type="checkbox" checked><svg><use href="#t-ste"/></svg>修剪和延伸 (12)</label></td><td>1</td></tr>
                <tr class="dim"><td><label class="node"><span class="branch sub"></span><input type="checkbox" checked><svg><use href="#t-line"/></svg>直线 (13)</label></td><td>1</td></tr>
                <tr class="dim"><td><label class="node"><span class="branch sub"></span><input type="checkbox" checked><svg><use href="#t-line"/></svg>直线 (14)</label></td><td>1</td></tr>
                <tr class="dim"><td><label class="node"><span class="branch sub"></span><input type="checkbox" checked><svg><use href="#trimsheet"/></svg>修剪片体 (15)</label></td><td>1</td></tr>
                <tr><td><label class="node"><span class="branch sub"></span><input type="checkbox" checked><svg><use href="#t-thick"/></svg>加厚 (16)</label></td><td>1</td></tr>
                <tr><td><label class="node"><span class="branch sub"></span><input type="checkbox" checked><svg><use href="#t-sub"/></svg>求差 (17)</label></td><td>1</td></tr>
                <tr><td><label class="node"><span class="branch sub"></span><input type="checkbox" checked><svg><use href="#hole"/></svg>简单孔 (18)</label></td><td>1</td></tr>
                <tr><td><div class="node"><span class="branch sub"></span></div></td><td></td></tr>
              </tbody>
            </table>
            <div class="vscroll">
              <button title="向上"><svg viewBox="0 0 9 6"><path d="M1 5l3.500-4L8 5" fill="none" stroke="#555" stroke-width="2"/></svg></button>
              <div class="thumb"></div>
              <button class="end" title="向下"><svg viewBox="0 0 9 6"><path d="M1 1l3.500 4L8 1" fill="none" stroke="#555" stroke-width="2"/></svg></button>
            </div>
          </div>
          <div class="hscroll">
            <button title="向左"><svg viewBox="0 0 6 9"><path d="M5 1L1 4.500 5 8" fill="none" stroke="#444" stroke-width="2"/></svg></button>
            <div class="thumb"></div>
            <button class="end" title="向右"><svg viewBox="0 0 6 9"><path d="M1 1l4 3.500L1 8" fill="none" stroke="#444" stroke-width="2"/></svg></button>
          </div>
        </div>
        <div class="splitter"></div>
      </aside>

      <section class="viewport">
        <svg class="part" viewBox="0 0 615 660" stroke="#2f3a38" stroke-width="5" stroke-linejoin="round">
          <defs>
            <linearGradient id="edge" x1="0" y1="0" x2="1" y2="0"><stop offset="0" stop-color="#007a5a"/><stop offset="1" stop-color="#00b084"/></linearGradient>
            <linearGradient id="round" x1="0" y1="1" x2="1" y2="0"><stop offset="0" stop-color="#008a66"/><stop offset="1" stop-color="#0fffc4"/></linearGradient>
            <linearGradient id="groove" x1="0" y1="0" x2="1" y2="0"><stop offset="0" stop-color="#007e5c"/><stop offset="1" stop-color="#00b588"/></linearGradient>
          </defs>
          <!-- right foot -->
          <path d="M440 402l22-5 118 56 4 8v50l-94 30-20-8-42-4z" fill="#00a67c"/>
          <path d="M440 402l22-5 118 56-114 36-26-12z" fill="#00f2b6"/>
          <path d="M580 453l4 8-116 35-2-8z" fill="#0be0a8"/>
          <ellipse cx="479" cy="434" rx="29" ry="12" fill="#008a68"/>
          <path d="M430 474c2-12 22-16 24-4-1 12-12 10-14 16l26 6v44l-36-8z" fill="#00a67c"/>
          <path d="M442 484v46M452 488v46" fill="none"/>
          <!-- tower -->
          <path d="M174 114c0-24 16-38 38-42l52-20 16-8 36-4 46-16 12 6 34 12 30 18c6 8 8 18 6 30v388l-14 10v42l-150 42-48-44-57-30z" fill="#00a67c"/>
          <path d="M174 114l60 34v384l-59-34z" fill="#007858"/>
          <path d="M234 148c6-2 14-4 20-4v380c0 8-8 10-20 8z" fill="url(#edge)"/>
          <path d="M174 114c0-24 16-38 38-42l60 24c-20 6-36 18-38 52z" fill="url(#round)"/>
          <path d="M234 148c0-28 14-48 38-52l-2 16c-12 6-16 18-16 32-8 0-14 2-20 4z" fill="#00d6a0"/>
          <path d="M212 72l52-20 16-8 36-4 46-16 12 6 34 12 14 12-58 20-44 8-48 14z" fill="#00f2b6"/>
          <path d="M272 96l48-14 44-8 58-20c12 4 20 14 22 26-8-8-16-10-26-8l-48 14-50 12-50 14z" fill="#0cdba5"/>
          <ellipse cx="312" cy="64" rx="33" ry="13" fill="#3a4340"/>
          <path d="M286 72c10 4 24 5 36 2" stroke="#008a68" fill="none"/>
          <path d="M328 98c14 2 30-8 44-14v98c-14 6-30 0-44 8z" fill="url(#groove)" stroke="none"/>
          <path d="M323 86v106" stroke-width="9"/>
          <path d="M372 72v108" fill="none"/>
          <!-- window -->
          <path d="M284 206l42-14 48-14 32-6v240l-42 78-10 30h-16v-18l-48-48 2-8V222c-10 0-12-8-8-16z" fill="#d5d5d5"/>
          <path d="M328 192l46-14 31-6v236l-77-34z" fill="#007d5b"/>
          <path d="M374 178l40-12 2 16-12 4z" fill="#333c39"/>
          <path d="M405 182v225" fill="none"/>
          <path d="M330 372l86 32-2 20-84-36z" fill="#323b38"/>
          <path d="M340 382l66 28" stroke="#647a72" stroke-width="4" stroke-dasharray="3 4"/>
          <path d="M406 424l-46 68v26l50-40z" fill="#00a67c" stroke="none"/>
          <path d="M288 452l72 40-2 16-4 10-16 2v-14l-52-42z" fill="#00a67c"/>
          <path d="M330 388l76 36-46 68-72-40z" fill="#0be0aa"/>
          <path d="M328 478l30 12v18z" fill="#007858"/>
          <!-- left foot -->
          <path d="M35 534c0-8 8-10 16-12l110-34 20 12 52 30 40 12 6 8v40c-14 2-20 10-22 20l-105 32-117-52z" fill="#00a67c"/>
          <path d="M35 534l112 50 5 58-117-52z" fill="#007858"/>
          <path d="M44 522l118-34 104 48-110 36z" fill="#00f8bc"/>
          <path d="M35 534c0-8 6-10 12-12l108 50-8 12z" fill="#00d8a0"/>
          <path d="M156 572l110-34 12 8-118 40z" fill="#0be0a8"/>
          <path d="M147 584c2-10 14-10 14 2v54h-10z" fill="#00b488"/>
          <path d="M164 498l58 28c16 8 30 6 40 0l6 10c-14 4-34 4-46-2l-56-26z" fill="#00c090"/>
          <ellipse cx="139" cy="537" rx="28" ry="12" fill="#008a68"/>
        </svg>

        <svg class="triad" viewBox="0 0 192 216">
          <path d="M62 94l44-16 42 16v50l-42 20-44-16zM62 94l40 14 46-14M102 108v54M106 78v50l42 16M106 128l-44 18" fill="none" stroke="#a070a8" stroke-width="3"/>
          <path d="M62 146l58-16v-6l20 2-18 10-60 16z" fill="#8cc49c"/>
          <path d="M61 148V78" stroke="#1438e8" stroke-width="6"/><path d="M53 84l8-28 8 28z" fill="#1438e8"/>
          <path d="M62 150l48 20" stroke="#d42a2a" stroke-width="7"/><path d="M100 174l8-16 20 18z" fill="#d42a2a"/>
          <circle cx="60" cy="148" r="13" fill="url(#gg)"/>
          <text x="52" y="54" fill="#1438e8">Z</text><text x="124" y="194" fill="#d42a2a">X</text><text x="142" y="134" fill="#3f9a50">Y</text>
        </svg>
      </section>
    </main>

    <footer class="bar bar-bottom">
      <button class="drop first" title="更多"></button>
      <button class="tool" title="装配导航"><svg><use href="#asm1"/></svg></button>
      <button class="tool" title="窗口" disabled><svg><use href="#asm2"/></svg></button>
      <button class="tool" title="添加组件"><svg><use href="#asm3"/></svg></button><button class="drop" title="组件"></button>
      <button class="tool" title="移动组件"><svg><use href="#asm4"/></svg></button>
      <button class="tool" title="镜像装配"><svg><use href="#asm5"/></svg></button>
      <button class="tool" title="约束"><svg><use href="#asm6"/></svg></button>
      <i class="sep"></i>
      <button class="tool" title="编辑组件"><svg><use href="#asm7"/></svg></button>
      <button class="tool" title="爆炸图"><svg><use href="#asm8"/></svg></button>
      <button class="drop low more spaced" title="更多按钮"><svg><use href="#more"/></svg></button>
      <i class="grip"></i>
      <button class="tool" title="草图"><svg><use href="#sketch"/></svg></button>
      <button class="finish" disabled><svg><use href="#flag"/></svg>完成草图</button>
      <button class="tool" title="轮廓"><svg><use href="#profile"/></svg></button>
      <button class="tool" title="直线"><svg><use href="#line"/></svg></button>
      <button class="tool" title="圆弧"><svg><use href="#arc"/></svg></button>
      <button class="tool" title="圆"><svg><use href="#circle"/></svg></button>
      <button class="tool" title="圆角" disabled><svg><use href="#fillet"/></svg></button>
      <button class="tool" title="倒斜角" disabled><svg><use href="#chamfer"/></svg></button>
      <button class="tool" title="矩形"><svg><use href="#rect"/></svg></button>
      <button class="tool" title="艺术样条"><svg><use href="#spline"/></svg></button>
      <button class="tool" title="点"><svg><use href="#plus"/></svg></button>
      <button class="tool" title="偏置曲线" disabled><svg><use href="#offg"/></svg></button><button class="drop" title="曲线"></button>
      <i class="sep"></i>
      <button class="tool" title="快速修剪" disabled><svg><use href="#qtrim"/></svg></button>
      <button class="tool" title="快速延伸" disabled><svg><use href="#qext"/></svg></button>
      <button class="tool" title="制作拐角" disabled><svg><use href="#corner"/></svg></button>
      <i class="sep"></i>
      <button class="tool" title="自动判断尺寸" disabled><svg><use href="#dimg"/></svg></button><button class="drop" title="尺寸"></button>
      <i class="sep"></i>
      <button class="tool" title="几何约束" disabled><svg><use href="#cons1"/></svg></button>
      <button class="tool" title="设为对称" disabled><svg><use href="#cons2"/></svg></button>
      <button class="tool" title="显示约束" disabled><svg><use href="#cons3"/></svg></button><button class="drop" title="约束选项"></button>
      <i class="sep"></i>
      <button class="tool" title="转换参考" disabled><svg><use href="#shp1"/></svg></button>
      <button class="tool" title="备选解" disabled><svg><use href="#shp2"/></svg></button>
    </footer>
  </div>

</body>
</html>
```
FILE: styles.css
```css
:root {
  --line: #dcdcdc;
  --frame: #868e93;
  --canvas: #d5d5d5;
  --dim: #a0a0a0;
}

* {
  box-sizing: border-box;
}

body {
  margin: 0;
  font: 12px/20px "Open Sans", "Noto Sans CJK SC", sans-serif;
  color: #1a1a1a;
  background: #fff;
}

button {
  padding: 0;
  border: 0;
  background: none;
  font: inherit;
  color: inherit;
}

.sprite {
  position: absolute;
  width: 0;
  height: 0;
}

.app {
  display: flex;
  flex-direction: column;
  height: 100vh;
  overflow: hidden;
}

/* toolbars */
.bar {
  display: flex;
  align-items: center;
  height: 34px;
  border-bottom: 1px solid var(--line);
  overflow: hidden;
}

.bar > * {
  flex: none;
}

.bar-top {
  height: 17px;
  align-items: flex-end;
}

.bar-shift {
  margin-left: -2px;
}

.tool {
  display: flex;
  align-items: center;
  justify-content: center;
  width: 31px;
  height: 33px;
}

.tool svg {
  width: 24px;
  height: 24px;
  stroke-width: .8;
}

.sep {
  width: 6px;
  height: 33px;
  background: linear-gradient(#d0d0d0, #d0d0d0) 2px 4px / 1px 26px no-repeat;
}

.grip {
  width: 9px;
  height: 33px;
  margin-left: 1px;
  border-left: 1px solid var(--line);
  background: repeating-linear-gradient(#b4b4b4 0 2px, #fff 2px 4px) 4px 3px / 3px 27px no-repeat;
}

.drop {
  display: flex;
  flex-direction: column;
  align-items: center;
  justify-content: center;
  width: 12px;
  height: 33px;
}

.drop::after {
  content: "";
  border: 3px solid transparent;
  border-top-color: #111;
  border-bottom: 0;
}

.drop.low {
  justify-content: flex-end;
  padding-bottom: 8px;
}

.drop.first,
.drop.narrow {
  width: 10px;
}

.drop.more {
  width: 14px;
  justify-content: space-between;
  padding-top: 5px;
}

.drop.more svg {
  width: 8px;
  height: 6px;
}

.drop.spaced {
  margin-left: 25px;
}

.bar-bottom .drop.spaced {
  margin-left: 18px;
}

.start {
  height: 33px;
  margin-left: -3px;
  padding-bottom: 4px;
  white-space: nowrap;
}

.finder {
  display: flex;
  align-items: center;
  width: 126px;
  height: 21px;
  margin: 0 4px 6px;
  border: 1px solid #a8a8a8;
}

.finder input {
  flex: 1;
  min-width: 0;
  height: 19px;
  padding: 0 1px;
  border: 0;
  font: inherit;
  color: inherit;
}

.finder svg {
  display: block;
  width: 16px;
  height: 16px;
}

.tolerance {
  flex-direction: column;
}

.tolerance svg {
  height: 12px;
}

.tolerance span {
  font: bold 11px/12px "Liberation Sans", sans-serif;
}

.tolerance b {
  color: #a8242c;
}

/* selection bar */
.bar-select {
  height: 32px;
  border-bottom-color: var(--frame);
}

.combo {
  appearance: none;
  height: 20px;
  padding: 0 2px;
  border: 1px solid #a0a0a0;
  border-radius: 0;
  font: inherit;
  line-height: 18px;
  color: #111;
  background:
    linear-gradient(to bottom left, #111 50%, transparent 50%) right 9px center / 4px 4px no-repeat,
    linear-gradient(to bottom right, #111 50%, transparent 50%) right 5px center / 4px 4px no-repeat,
    #fff;
}

.combo-filter {
  width: 114px;
  margin: 0 7px 0 -16px;
}

.combo-scope {
  width: 140px;
  margin-right: 4px;
}

.pick {
  display: flex;
  align-items: center;
  justify-content: center;
  width: 23px;
  height: 23px;
}

.pick svg {
  width: 18px;
  height: 18px;
}

.pick.on {
  border: 1px solid #a9c4c1;
  background: #c9d8d7;
}

/* part navigator */
.workspace {
  flex: 1;
  display: flex;
  min-height: 0;
}

.navigator {
  display: flex;
  flex-direction: column;
  flex: none;
  width: 212px;
  border-right: 1px solid var(--frame);
}

.nav-title {
  display: flex;
  align-items: center;
  justify-content: space-between;
  height: 28px;
  padding: 1px 16px 0 2px;
}

.nav-title h2 {
  margin: 0;
  font-size: 12px;
  font-weight: normal;
}

.maximize {
  width: 12px;
  height: 11px;
  border: 1px solid #111;
  border-top-width: 2px;
}

.nav-body {
  flex: 1;
  display: flex;
  flex-direction: column;
  min-height: 0;
  width: 202px;
  border: 1px solid var(--line);
  border-left: 0;
}

.tree-view {
  position: relative;
  flex: 1;
  min-height: 0;
  overflow: hidden;
}

.tree {
  width: 100%;
  table-layout: fixed;
  border-collapse: separate;
  border-spacing: 0;
}

.tree th {
  height: 22px;
  padding: 1px 0 0 6px;
  border-bottom: 1px solid #cfcfcf;
  background: #efefef;
  font-weight: normal;
  text-align: left;
  white-space: nowrap;
}

.tree .col-name {
  width: 170px;
  border-right: 1px solid #cfcfcf;
}

.sort {
  display: inline-block;
  margin: 0 0 1px 18px;
  border: 5px solid transparent;
  border-bottom-color: #111;
  border-top: 0;
}

.tree td {
  height: 20px;
  padding: 0 0 0 4px;
  border-bottom: 1px solid #e9e9e9;
  line-height: 19px;
  color: #1c3a5c;
}

.tree td:first-child {
  padding: 0;
  border-right: 1px solid #e4e4e4;
  color: #1a1a1a;
}

.tree tr:nth-child(even) td {
  background: #f9f9f9;
}

.tree .dim td,
.tree .dim td:first-child {
  color: var(--dim);
}

.node {
  display: flex;
  align-items: center;
  height: 19px;
  white-space: nowrap;
}

.node svg {
  flex: none;
  width: 16px;
  height: 16px;
  margin-right: 3px;
}

.node .mark {
  width: 13px;
  height: 13px;
  margin: 0 2px;
}

.branch {
  display: flex;
  align-items: center;
  flex: none;
  width: 19px;
  height: 20px;
  padding-left: 5px;
  background:
    repeating-linear-gradient(#a0a0a0 0 1px, transparent 1px 2px) 9px 0 / 1px 20px no-repeat,
    repeating-linear-gradient(90deg, #a0a0a0 0 1px, transparent 1px 2px) 9px 10px / 9px 1px no-repeat;
}

.branch.top {
  background-position: 9px 10px, 9px 10px;
}

.branch.last {
  background-size: 1px 10px, 9px 1px;
}

.branch.sub {
  width: 40px;
  background-position: 28px 0, 28px 10px;
}

.expander {
  width: 9px;
  height: 9px;
  border: 1px solid #d0d0d0;
  background:
    linear-gradient(#111, #111) center / 5px 1px no-repeat,
    linear-gradient(#111, #111) center / 1px 5px no-repeat,
    #fff;
}

.expander.open {
  background: linear-gradient(#111, #111) center / 5px 1px no-repeat, #fff;
}

.node input {
  appearance: none;
  flex: none;
  width: 12px;
  height: 12px;
  margin: 0 2px 0 0;
  border: 1px solid #000;
  background: #fff;
}

.node input:checked::before {
  content: "";
  display: block;
  height: 10px;
  background: #12b52c;
  clip-path: polygon(0 50%, 20% 40%, 40% 60%, 90% 0, 100% 25%, 45% 100%, 30% 100%);
}

.vscroll {
  position: absolute;
  top: 22px;
  right: 0;
  bottom: 0;
  display: flex;
  flex-direction: column;
  width: 17px;
  padding-right: 2px;
  background: #f0f0f0;
  border-right: 1px solid #fff;
}

.vscroll button,
.hscroll button {
  display: flex;
  align-items: center;
  justify-content: center;
  flex: none;
  width: 16px;
  height: 17px;
}

.vscroll svg {
  width: 9px;
  height: 6px;
}

.hscroll svg {
  width: 6px;
  height: 9px;
}

.vscroll .thumb {
  height: 68%;
  background: #cdcdcd;
}

.vscroll .end {
  margin-top: auto;
}

.hscroll {
  display: flex;
  flex: none;
  height: 17px;
  padding-right: 17px;
  background: #f0f0f0;
}

.hscroll .thumb {
  width: 63px;
  height: 15px;
  margin-left: 1px;
  background: #cdcdcd;
}

.hscroll .end {
  margin-left: auto;
}

.splitter {
  width: 202px;
  height: 5px;
  margin: 1px 0 7px;
  border: 1px solid #a8a8a8;
  border-left: 0;
  background: #d8d8d8;
}

/* graphics window */
.viewport {
  position: relative;
  flex: 1;
  background: var(--canvas);
}

.part {
  position: absolute;
  left: 348px;
  top: 178px;
  width: 205px;
  height: 220px;
}

.triad {
  position: absolute;
  left: 28px;
  bottom: 29px;
  width: 64px;
  height: 72px;
}

.triad text {
  font: 34px "Liberation Sans", sans-serif;
}

/* sketch bar */
.bar-bottom {
  flex: none;
  border-bottom-color: #a8a8a8;
  margin-bottom: 2px;
}

.finish {
  display: flex;
  align-items: center;
  gap: 4px;
  width: 79px;
  padding-left: 3px;
  font-size: 11px;
  color: #b8b8b8;
  white-space: nowrap;
}

.finish svg {
  width: 24px;
  height: 24px;
}
```
